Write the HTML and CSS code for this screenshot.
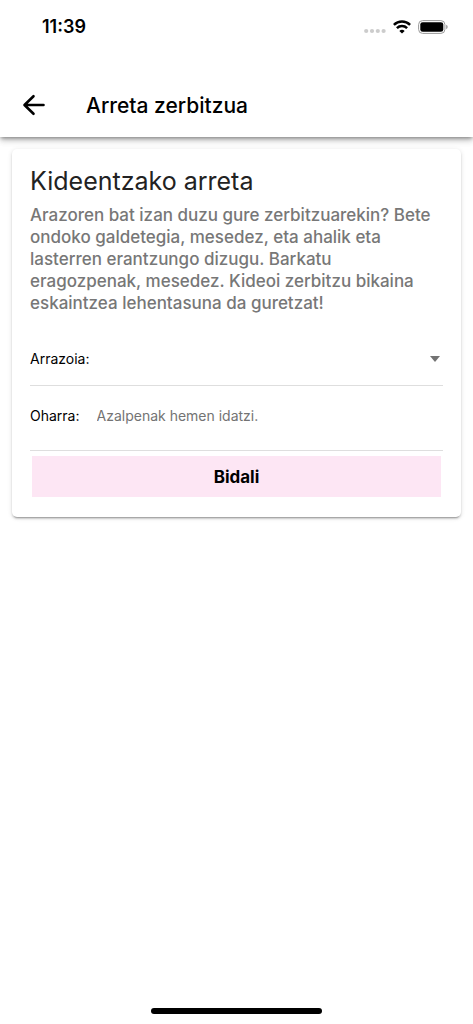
FILE: index.html
```html
<!DOCTYPE html>
<html lang="eu">
<head>
<meta charset="utf-8">
<meta name="viewport" content="width=device-width, initial-scale=1">
<title>Arreta zerbitzua</title>
<link rel="stylesheet" href="styles.css">
</head>
<body>
<header class="header">
  <div class="status">
    <time class="clock">11:39</time>
    <div class="indicators">
      <svg class="signal" viewBox="0 0 22 6" aria-hidden="true"><circle cx="2.2" cy="3" r="2.1"/><circle cx="8" cy="3" r="2.1"/><circle cx="13.8" cy="3" r="2.1"/><circle cx="19.6" cy="3" r="2.1"/></svg>
      <svg class="wifi" viewBox="0 0 18 14" aria-hidden="true"><path d="M.9 4.8A11.7 11.7 0 0 1 17.1 4.8M3.9 8.2A7.3 7.3 0 0 1 14.1 8.2" fill="none" stroke="#000" stroke-width="2.5"/><path d="M9 13.600 6.300 10.900Q9 8.700 11.700 10.900Z"/></svg>
      <svg class="battery" viewBox="0 0 30 14" aria-hidden="true"><rect x=".6" y=".6" width="26.3" height="12.8" rx="4" fill="none" stroke="#999" stroke-width="1"/><rect x="2.3" y="2.2" width="23" height="9.6" rx="2.4"/><path d="M28.2 4.8Q29.7 5.4 29.7 7T28.2 9.2Z" fill="#999"/></svg>
    </div>
  </div>
  <div class="toolbar">
    <button class="back" type="button" aria-label="Atzera">
      <svg viewBox="0 0 24 22" aria-hidden="true"><path d="M11.5 2.2 2.5 11l9 8.8M3 11h18.500"/></svg>
    </button>
    <h1 class="title">Arreta zerbitzua</h1>
  </div>
</header>
<main class="content">
  <form class="card">
    <h2 class="heading">Kideentzako arreta</h2>
    <p class="intro">Arazoren bat izan duzu gure zerbitzuarekin? Bete ondoko galdetegia, mesedez, eta ahalik eta lasterren erantzungo dizugu. Barkatu eragozpenak, mesedez. Kideoi zerbitzu bikaina eskaintzea lehentasuna da guretzat!</p>
    <div class="field">
      <label for="reason">Arrazoia:</label>
      <select class="reason" id="reason"><option value=""></option></select>
      <svg class="caret" viewBox="0 0 10 6" aria-hidden="true"><path d="M0 0h10L5 6Z"/></svg>
    </div>
    <div class="field field-note">
      <label for="note">Oharra:</label>
      <textarea class="note" id="note" rows="1" placeholder="Azalpenak hemen idatzi."></textarea>
    </div>
    <button class="submit" type="submit">Bidali</button>
  </form>
</main>
<footer class="home"><div class="home-bar"></div></footer>
</body>
</html>
```
FILE: styles.css
```css
* { box-sizing: border-box; }
body {
  margin: 0;
  min-height: 100vh;
  display: flex;
  flex-direction: column;
  background: #fff;
  color: #000;
  font-family: Inter, "Liberation Sans", sans-serif;
}
button, select, textarea { font: inherit; color: inherit; border: 0; background: none; padding: 0; }
.header {
  background: #fff;
  box-shadow: 0 2px 4px -1px rgba(0, 0, 0, .4), 0 4px 6px rgba(0, 0, 0, .14), 0 1px 10px rgba(0, 0, 0, .1);
}
.status {
  height: 53px;
  padding: 0 25px 0 42px;
  display: flex;
  align-items: center;
  justify-content: space-between;
}
.clock { font-size: 18px; font-weight: 600; line-height: 25px; }
.indicators { display: flex; align-items: center; gap: 7px; }
.signal { width: 22px; height: 6px; margin-top: 9px; fill: #ccc; }
.wifi { width: 18px; height: 14px; }
.battery { width: 30px; height: 14px; }
.toolbar {
  padding: 24px 22px 4px;
  display: flex;
  align-items: center;
  gap: 40px;
}
.back { height: 56px; display: flex; align-items: center; }
.back svg {
  width: 24px;
  height: 22px;
  fill: none;
  stroke: #000;
  stroke-width: 2.6;
  stroke-linecap: round;
  stroke-linejoin: round;
}
.title { margin: 0; padding-top: 2px; font-size: 21px; font-weight: 500; line-height: 28px; }
.content { flex: 1; padding: 12px; }
.card {
  padding: 17px 18px 20px;
  border-radius: 5px;
  background: #fff;
  box-shadow: 0 3px 1px -2px rgba(0, 0, 0, .2), 0 2px 2px rgba(0, 0, 0, .14), 0 1px 5px rgba(0, 0, 0, .12);
}
.heading { margin: 0 0 8px; color: #222; font-size: 25px; font-weight: 400; line-height: 30px; }
.intro { margin: 0; color: #777; font-size: 17px; font-weight: 500; line-height: 22px; }
.field {
  height: 54px;
  margin-top: 18px;
  display: flex;
  align-items: center;
  border-bottom: 1px solid #dedede;
  font-size: 14px;
  line-height: 20px;
}
.reason { flex: 1; height: 40px; appearance: none; }
.caret { width: 10px; height: 6px; margin-right: 3px; fill: #737373; }
.field-note { height: 65px; margin-top: 0; align-items: flex-start; padding-top: 20px; gap: 17px; }
.note { flex: 1; height: 20px; resize: none; overflow: hidden; }
.note::placeholder { color: #737373; opacity: 1; }
.submit {
  display: block;
  width: calc(100% - 4px);
  height: 41px;
  margin: 5px 2px 0;
  background: #fde6f4;
  font-size: 17px;
  font-weight: 700;
}
.home { padding: 0 0 10px; display: flex; justify-content: center; }
.home-bar { width: 36%; height: 6px; border-radius: 3px; background: #000; }
```
